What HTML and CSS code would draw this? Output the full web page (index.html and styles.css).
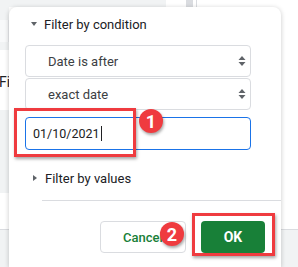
FILE: index.html
```html
<!DOCTYPE html>
<html lang="en">
<head>
  <meta charset="UTF-8"/>
  <title>Filter by condition</title>
  <link rel="stylesheet" href="styles.css">
</head>
<body>

<div class="sheet">
  <div class="sheet-top">
    <span class="top-gray"></span>
    <span class="top-cell"></span>
    <span class="top-handle"></span>
    <span class="top-line"></span>
  </div>
  <div class="sheet-body">
    <div class="sheet-left">
      <div class="left-a"><div class="left-box"></div></div>
      <div class="left-b">Fi</div>
      <div class="left-c"></div>
      <div class="left-d"></div>
    </div>
  </div>
  <div class="sheet-bottom"></div>
</div>

<div class="dialog">
  <div class="section-head"><span class="tri-down"></span>Filter by condition</div>
  <div class="select">Date is after
    <svg class="updown" width="8" height="12" viewBox="0 0 8 12"><path d="M4 1L7.5 5H.5z M4 11L.5 7h7z" fill="#5f6368"/></svg>
  </div>
  <div class="select">exact date
    <svg class="updown" width="8" height="12" viewBox="0 0 8 12"><path d="M4 1L7.5 5H.5z M4 11L.5 7h7z" fill="#5f6368"/></svg>
  </div>
  <div class="date-input">01/10/2021<span class="caret"></span></div>
  <div class="section-head closed"><span class="tri-right"></span>Filter by values</div>
  <div class="divider"></div>
  <div class="actions">
    <button class="btn btn-cancel">Cancel</button>
    <button class="btn btn-ok">OK</button>
  </div>
</div>

<div class="mark mark-input"></div>
<div class="mark mark-ok"></div>
<div class="badge badge-1">1</div>
<div class="badge badge-2">2</div>

</body>
</html>
```

FILE: styles.css
```css
*,*::before,*::after{box-sizing:border-box;margin:0;padding:0;}
body{width:298px;height:267px;overflow:hidden;position:relative;font-family:Roboto,"Liberation Sans",sans-serif;background:#fff;color:#202124;}

/* spreadsheet behind the dialog */
.sheet{display:flex;flex-direction:column;height:267px;}
.sheet-top{display:flex;height:7px;}
.top-gray{width:166px;background:#f1f3f4;}
.top-cell{width:20px;background:#fff;}
.top-handle{width:7px;background:#dadce0;}
.top-line{width:4px;border-right:1px solid #dadce0;}
.sheet-body{height:222px;display:flex;}
.sheet-left{width:9px;display:flex;flex-direction:column;}
.left-a{height:43px;background:#f1f3f4;padding-top:13px;}
.left-box{height:22px;background:#f8f9fa;border-right:1px solid #e8eaed;}
.left-b{height:60px;background:#fff;font-size:14px;line-height:56px;padding-top:4px;margin-left:-1px;overflow:hidden;white-space:nowrap;}
.left-c{height:83px;background:#f1f3f4;}
.left-d{flex:1;background:#fff;}
.sheet-bottom{flex:1;background:#f1f3f4;border-top:1px solid #dadce0;}

/* filter dialog */
.dialog{position:absolute;left:9px;top:7px;width:272px;height:260px;background:#fff;border-radius:8px 8px 0 0;box-shadow:0 1px 5px rgba(0,0,0,.22);padding:7px 16px 0 16px;}
.section-head{height:20px;display:flex;align-items:center;padding-left:6px;font-size:13px;color:#202124;}
.tri-down{width:0;height:0;border-left:3.5px solid transparent;border-right:3.5px solid transparent;border-top:4px solid #5f6368;margin-right:7px;}
.section-head.closed{margin-top:18px;padding-left:8px;}
.tri-right{width:0;height:0;border-top:3.5px solid transparent;border-bottom:3.5px solid transparent;border-left:4px solid #5f6368;margin-right:8px;}
.select{width:226px;height:32px;border:1px solid #dadce0;border-radius:4px;display:flex;align-items:center;justify-content:space-between;padding:0 4px 0 22px;font-size:13px;color:#3c4043;margin-top:1px;}
.section-head + .select{margin-top:11px;}
.date-input{width:226px;height:33px;margin-top:7px;border:1px solid #1a73e8;border-radius:4px;display:flex;align-items:center;padding-left:7px;font-size:12.5px;color:#202124;}
.caret{width:1px;height:15px;background:#202124;margin-left:1px;}
.divider{height:1px;background:#dadce0;margin:12px -16px 0 17px;}
.actions{display:flex;justify-content:flex-end;gap:15px;margin-top:20px;}
.btn{height:32px;border-radius:4px;font-family:inherit;font-size:13px;font-weight:500;}
.btn-cancel{width:86px;background:#fff;border:1px solid #dadce0;color:#188038;}
.btn-ok{width:64px;background:#188038;border:none;color:#fff;font-size:14px;font-weight:700;}

/* red callouts drawn over the screenshot */
.mark{position:absolute;border:3px solid #ef3b3f;box-shadow:1px 2px 3px rgba(0,0,0,.35);}
.mark-input{left:14px;top:108px;width:122px;height:49px;}
.mark-ok{left:192px;top:213px;width:83px;height:43px;}
.badge{position:absolute;width:24px;height:24px;border-radius:50%;background:#ef3b3f;color:#fff;font-size:18px;font-weight:700;display:flex;align-items:center;justify-content:center;box-shadow:1px 2px 3px rgba(0,0,0,.35);}
.badge-1{left:139px;top:109px;}
.badge-2{left:160px;top:222px;}
```
